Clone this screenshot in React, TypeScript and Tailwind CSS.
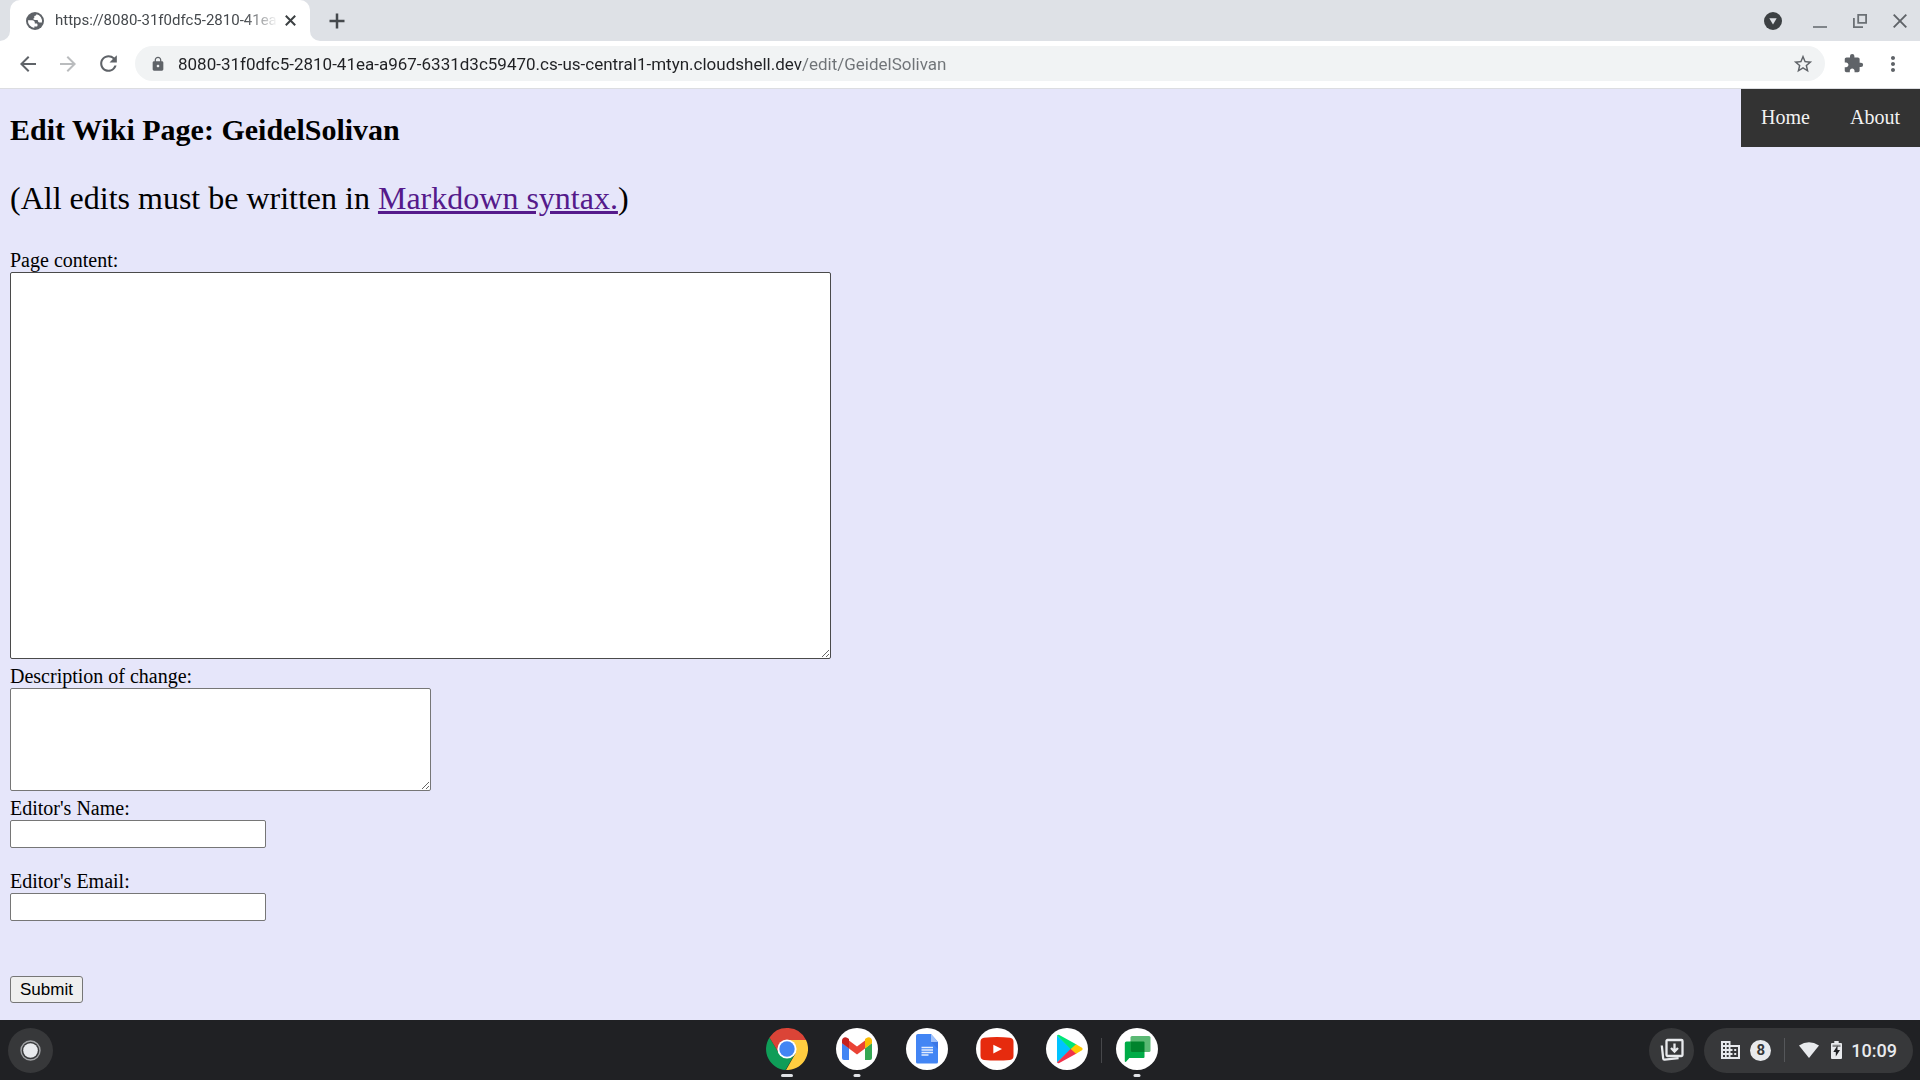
import React from 'react';
import {
  MdArrowBack,
  MdArrowForward,
  MdRefresh,
  MdLock,
  MdStarBorder,
  MdExtension,
  MdMoreVert,
} from 'react-icons/md';

const iconButton = 'flex size-8 items-center justify-center';

function GlobeIcon() {
  return (
    <svg viewBox="0 0 18 18" className="size-[18px] shrink-0" aria-hidden="true">
      <circle cx="9" cy="9" r="9" fill="#5f6368" />
      <path
        d="M2 8.2h4.2c1.6 0 2.6 1 2.6 2.3v1h1.5c.8 0 1.2.5 1.2 1.3v.6c0 .6-.4 1-1 1H8.300v1.5A7 7 0 0 1 2 8.200zM10.500 2.200c-.2 1.300-.9 1.700-2.200 1.700v1.500c0 .7-.4 1-1.100 1.100.2 1 .7 1.400 1.600 1.400h2c.8 0 1.200.5 1.200 1.200 0 .9.500 1.300 1.400 1.300h2.500A7 7 0 0 0 10.500 2.200z"
        fill="#fff"
      />
    </svg>
  );
}

function TabStrip() {
  return (
    <div className="flex h-[41px] items-end bg-[#dee1e6]">
      <div className="w-[10px] self-stretch bg-white">
        <div className="h-full rounded-br-[10px] bg-[#dee1e6]" />
      </div>
      <div className="flex h-full w-[300px] items-center rounded-t-[10px] bg-white pr-2 pl-4">
        <GlobeIcon />
        <span className="ml-[11px] flex-1 text-[15px] whitespace-nowrap text-[#45494d] [mask-image:linear-gradient(to_right,black_85%,transparent)]">
          https://8080-31f0dfc5-2810-41ea
        </span>
        <button aria-label="Close tab" className="flex size-6 items-center justify-center">
          <svg viewBox="0 0 11 11" className="size-[11px]" fill="none" stroke="#3c4043" strokeWidth="2">
            <path d="M.8.8l9.400 9.400M10.200.8L.8 10.200" />
          </svg>
        </button>
      </div>
      <div className="w-[10px] self-stretch bg-white">
        <div className="h-full rounded-bl-[10px] bg-[#dee1e6]" />
      </div>
      <button aria-label="New tab" className="ml-[1px] flex h-full w-8 items-center justify-center">
        <svg viewBox="0 0 16 16" className="size-4" fill="none" stroke="#45494d" strokeWidth="2.500">
          <path d="M8 .5v15M.5 8h15" />
        </svg>
      </button>
      <div className="ml-auto flex h-full items-center gap-2 pr-1">
        <button aria-label="Search tabs" className="mr-[7px] flex size-8 items-center justify-center">
          <svg viewBox="0 0 18 18" className="size-[18px]">
            <circle cx="9" cy="9" r="9" fill="#3c4043" />
            <path d="M5.300 6.300h7.400L9 12.500z" fill="#dee1e6" />
          </svg>
        </button>
        <button aria-label="Minimize" className={iconButton}>
          <svg viewBox="0 0 14 14" className="size-[14px]">
            <path d="M0 12h14v2H0z" fill="#80858a" />
          </svg>
        </button>
        <button aria-label="Restore" className={iconButton}>
          <svg viewBox="0 0 14 14" className="size-[14px]" fill="none" stroke="#6b7075" strokeWidth="1.800">
            <path d="M5.200.9h7.900v7.900H5.200zM.9 4v9.100H10" />
          </svg>
        </button>
        <button aria-label="Close window" className={iconButton}>
          <svg viewBox="0 0 14 14" className="size-[14px]" fill="none" stroke="#5f6368" strokeWidth="1.900">
            <path d="M.7.7l12.600 12.600M13.300.7L.7 13.300" />
          </svg>
        </button>
      </div>
    </div>
  );
}

function Toolbar() {
  return (
    <div className="flex h-12 items-center border-b border-[#dcdde1] bg-white pr-[11px] pb-[2px] pl-3 text-[#5f6368]">
      <button aria-label="Back" className={iconButton}>
        <MdArrowBack size={24} />
      </button>
      <button aria-label="Forward" className="ml-2 flex size-8 items-center justify-center text-[#babcbe]">
        <MdArrowForward size={24} />
      </button>
      <button aria-label="Reload" className="ml-2 flex size-8 items-center justify-center">
        <MdRefresh size={25} />
      </button>
      <div className="ml-[11px] flex h-[35px] flex-1 items-center rounded-full bg-[#f1f3f4] pr-[11px] pl-[15px]">
        <MdLock size={16} className="shrink-0" />
        <input
          type="text"
          aria-label="Address"
          defaultValue="8080-31f0dfc5-2810-41ea-a967-6331d3c59470.cs-us-central1-mtyn.cloudshell.dev/edit/GeidelSolivan"
          className="ml-3 min-w-0 flex-1 bg-linear-to-r from-[#202124] from-[624px] to-[#6f7377] to-[624px] bg-clip-text text-[17px] leading-6 text-transparent outline-none"
        />
        <button aria-label="Bookmark this page">
          <MdStarBorder size={22} />
        </button>
      </div>
      <button aria-label="Extensions" className="ml-3 flex size-8 items-center justify-center">
        <MdExtension size={21} />
      </button>
      <button aria-label="Menu" className="ml-2 flex size-8 items-center justify-center">
        <MdMoreVert size={24} />
      </button>
    </div>
  );
}

const field = 'block max-w-full rounded-[2px] border bg-white';

function WikiPage() {
  return (
    <main className="flex flex-1 items-start justify-between bg-[#e6e6fa] font-['Liberation_Serif',serif] text-xl leading-6 text-black">
      <div className="min-w-0 flex-1 px-[10px] pt-6">
        <h2 className="text-3xl leading-[34px] font-bold">Edit Wiki Page: GeidelSolivan</h2>
        <p className="mt-[33px] text-[32px] leading-9">
          (All edits must be written in{' '}
          <a href="#markdown" className="text-[#551a8b] underline">
            Markdown syntax.
          </a>
          )
        </p>
        <form className="mt-8" onSubmit={(e) => e.preventDefault()}>
          <label htmlFor="content" className="block">
            Page content:
          </label>
          <textarea id="content" className={`${field} h-[387px] w-[821px] border-[#4a4a4a]`} />
          <label htmlFor="change" className="mt-[5px] block">
            Description of change:
          </label>
          <textarea id="change" className={`${field} h-[103px] w-[421px] border-[#767676]`} />
          <label htmlFor="name" className="mt-[5px] block">
            Editor's Name:
          </label>
          <input id="name" type="text" className={`${field} h-7 w-64 border-[#767676] px-1`} />
          <label htmlFor="email" className="mt-[21px] block">
            Editor's Email:
          </label>
          <input id="email" type="text" className={`${field} h-7 w-64 border-[#767676] px-1`} />
          <button
            type="submit"
            className="mt-[55px] block h-[27px] rounded-[3px] border border-[#767676] bg-[#efefef] px-[9px] font-['Liberation_Sans',sans-serif] text-[17px] leading-5"
          >
            Submit
          </button>
        </form>
      </div>
      <nav className="flex bg-[#333] text-[#f2f2f2]">
        <a href="#home" className="px-5 pt-[17px] pb-[19px] leading-[22px]">
          Home
        </a>
        <a href="#about" className="px-5 pt-[17px] pb-[19px] leading-[22px]">
          About
        </a>
      </nav>
    </main>
  );
}

function ChromeLogo() {
  return (
    <svg viewBox="0 0 42 42" className="size-[42px]">
      <path d="M3.500 9.500A21 21 0 0 0 19.500 42L30 24 21 21 13.200 25.500z" fill="#0f9d58" />
      <path d="M21 12h19a21 21 0 0 1-20 30l9.500-16.500z" fill="#ffcd40" />
      <path d="M3.500 9.500L13.200 25.500 21 12h19A21 21 0 0 0 3.500 9.500z" fill="#db4437" />
      <circle cx="21" cy="21" r="9.600" fill="#fff" />
      <circle cx="21" cy="21" r="7.700" fill="#4285f4" />
    </svg>
  );
}

function GmailLogo() {
  return (
    <svg viewBox="0 0 42 42" className="size-[42px]">
      <circle cx="21" cy="21" r="21" fill="#fff" />
      <path d="M6 15l7 5.200V32H8a2 2 0 0 1-2-2z" fill="#4285f4" />
      <path d="M29 20.200l7-5.200v15a2 2 0 0 1-2 2h-5z" fill="#34a853" />
      <path d="M13 12.500l8 6 8-6v8l-8 6-8-6z" fill="#ea4335" />
      <path d="M6 12.500c0-3 3.200-4.300 5.500-2.600l1.500 1.100v9.500l-7-5.200z" fill="#c5221f" />
      <path d="M36 12.500c0-3-3.200-4.300-5.500-2.600L29 11v9.500l7-5.200z" fill="#fbbc04" />
    </svg>
  );
}

function DocsLogo() {
  return (
    <svg viewBox="0 0 42 42" className="size-[42px]">
      <circle cx="21" cy="21" r="21" fill="#fff" />
      <path d="M12 6h13l7 8v20a1.500 1.500 0 0 1-1.500 1.500h-19A1.500 1.500 0 0 1 10 34V8a2 2 0 0 1 2-2z" fill="#4285f4" />
      <path d="M25 6l7 8h-7z" fill="#a1c2fa" />
      <path d="M25 14h7v7z" fill="#3367d6" opacity=".5" />
      <path d="M15.500 19.500h11.500M15.500 22h11.500M15.500 24.500h11.500M15.500 27h7" stroke="#e3edfd" strokeWidth="1.300" />
    </svg>
  );
}

function YouTubeLogo() {
  return (
    <svg viewBox="0 0 42 42" className="size-[42px]">
      <circle cx="21" cy="21" r="21" fill="#fff" />
      <path d="M8 9.800q13-1.400 26 0 3.500.4 3.500 4v14q0 3.800-3.500 4.200-13 1-26 0-3.500-.4-3.500-4.200v-14q0-3.600 3.500-4z" fill="#e62b0e" />
      <path d="M17.300 16.700v8.800l8.700-4.400z" fill="#fff" />
    </svg>
  );
}

function PlayLogo() {
  return (
    <svg viewBox="0 0 42 42" className="size-[42px]">
      <circle cx="21" cy="21" r="21" fill="#fff" />
      <path d="M11 7.500v27L25.500 21z" fill="#00c3ff" />
      <path d="M11 7.500q.8-1.200 2.300-.4L30.500 16.500 25 21.500z" fill="#00e676" />
      <path d="M11 34.500q.8 1.200 2.300.4L30.500 25.500 25 20.500z" fill="#f0334b" />
      <path d="M30 16.200l6 3.500q1.500 1.300 0 2.600l-6 3.500L24.800 21z" fill="#ffc800" />
    </svg>
  );
}

function ChatLogo() {
  return (
    <svg viewBox="0 0 42 42" className="size-[42px]">
      <circle cx="21" cy="21" r="21" fill="#fff" />
      <path d="M10.500 13.500h17a1 1 0 0 1 1 1V29a1 1 0 0 1-1 1H13.300l-3 3.600Q8.800 34.500 8.800 33V15.200a1.700 1.700 0 0 1 1.700-1.700z" fill="#00ac47" />
      <rect x="14.500" y="8" width="20" height="16" rx="1.500" fill="#5bb974" />
      <path d="M14.500 13.500h13a1 1 0 0 1 1 1V24H16a1.500 1.500 0 0 1-1.500-1.500z" fill="#00832d" />
    </svg>
  );
}

function AppIcon({ label, indicator, children }: { label: string; indicator?: string; children: React.ReactNode }) {
  return (
    <button aria-label={label} className="relative size-[42px]">
      {children}
      {indicator && (
        <span className={`absolute top-[46px] left-1/2 h-[3px] -translate-x-1/2 rounded-full bg-[#dfe1e5] ${indicator}`} />
      )}
    </button>
  );
}

function Shelf() {
  return (
    <footer className="grid h-[60px] grid-cols-[1fr_auto_1fr] items-center bg-[#202124]">
      <div className="pl-2">
        <button aria-label="Launcher" className="flex size-[45px] items-center justify-center rounded-full bg-[#37383a]">
          <svg viewBox="0 0 21 21" className="size-[21px]">
            <circle cx="10.500" cy="10.500" r="9.500" fill="none" stroke="#9fa1a4" strokeWidth="1.400" />
            <circle cx="10.500" cy="10.500" r="7.300" fill="#e8eaed" />
          </svg>
        </button>
      </div>
      <div className="flex items-center gap-7 pb-[2px] pl-1">
        <AppIcon label="Chrome" indicator="w-3">
          <ChromeLogo />
        </AppIcon>
        <AppIcon label="Gmail" indicator="w-[7px]">
          <GmailLogo />
        </AppIcon>
        <AppIcon label="Docs">
          <DocsLogo />
        </AppIcon>
        <AppIcon label="YouTube">
          <YouTubeLogo />
        </AppIcon>
        <AppIcon label="Play Store">
          <PlayLogo />
        </AppIcon>
        <div className="-mr-[14px] -ml-[15px] mt-[3px] h-[25px] w-px bg-[#47484b]" />
        <AppIcon label="Chat" indicator="w-[7px]">
          <ChatLogo />
        </AppIcon>
      </div>
      <div className="flex items-center justify-end gap-[10px] pr-[7px] text-[#e8eaed]">
        <button aria-label="Holding space" className="flex size-[45px] items-center justify-center rounded-full bg-[#37383a]">
          <svg viewBox="0 0 24 24" className="size-6" fill="none" stroke="#e8eaed" strokeWidth="2.300">
            <rect x="6.500" y="2" width="16" height="16" rx="1" />
            <path d="M14.500 5.500v7.500M11 10l3.500 3.500L18 10" />
            <path d="M1.800 7.500l1.400 13q.1 1.300 1.400 1.200l14-1.500" />
          </svg>
        </button>
        <button aria-label="Status tray" className="flex h-[45px] items-center rounded-full bg-[#37383a] pr-4 pl-[17px]">
          <svg viewBox="0 0 19 18" className="h-[18px] w-[19px]">
            <path
              fillRule="evenodd"
              fill="#e8eaed"
              d="M0 0h9.500v4H19v14H0zM2 2v2h2V2zM5.700 2v2h2V2zM2 6v2h2V6zM5.700 6v2h2V6zM2 10v2h2v-2zM5.700 10v2h2v-2zM2 14v2h2v-2zM5.700 14v2h2v-2zM9.500 6v2h2v2h-2v2h2v2h-2v2H17V6zM13.200 8h2v2h-2zM13.200 12h2v2h-2z"
            />
          </svg>
          <span className="ml-[10px] flex size-[21px] items-center justify-center rounded-full bg-[#e8eaed] text-[15px] leading-5 font-bold text-[#37383a]">
            8
          </span>
          <span className="mx-[13px] h-6 w-px bg-[#55575a]" />
          <svg viewBox="0 0 20 16" className="ml-[1px] h-4 w-5">
            <path d="M0 3.600Q10-3 20 3.600L10 16z" fill="#e8eaed" />
          </svg>
          <svg viewBox="0 0 11 18" className="ml-3 h-[18px] w-[11px]">
            <path d="M3.300 0h4.400v2H10a1 1 0 0 1 1 1v14a1 1 0 0 1-1 1H1a1 1 0 0 1-1-1V3a1 1 0 0 1 1-1h2.300z" fill="#e8eaed" />
            <path d="M1.500 3.700h8V6h-8z" fill="#8b8c8e" />
            <path d="M6.500 4.500L2.300 11h2.500v4.500L9 9H6.500z" fill="#202124" />
          </svg>
          <span className="ml-[9px] pt-[2px] text-lg leading-6 font-medium">10:09</span>
        </button>
      </div>
    </footer>
  );
}

export default function App() {
  return (
    <div className="flex min-h-screen flex-col font-['Roboto',sans-serif]">
      <header>
        <TabStrip />
        <Toolbar />
      </header>
      <WikiPage />
      <Shelf />
    </div>
  );
}
